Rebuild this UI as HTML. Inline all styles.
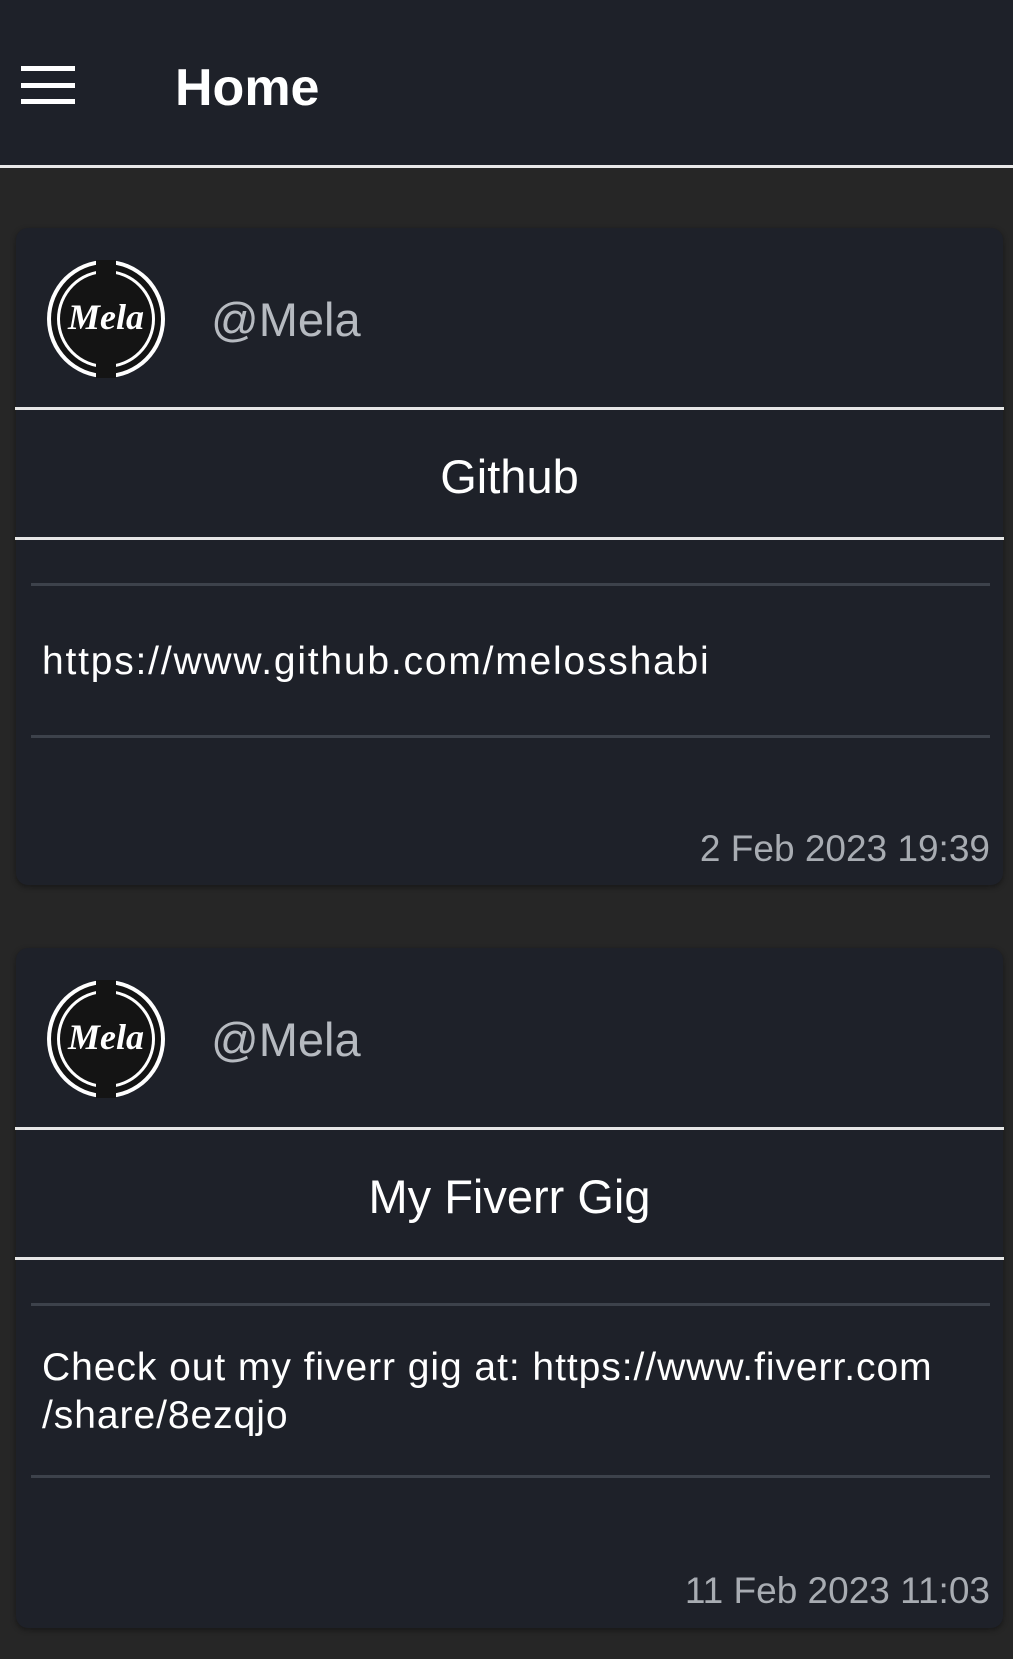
<!DOCTYPE html>
<html><head><meta charset="utf-8"><style>
*{margin:0;padding:0;box-sizing:border-box}
body{width:1013px;height:1659px;background:#262626;font-family:"Liberation Sans",sans-serif;position:relative;overflow:hidden}
.hdr{position:absolute;left:0;top:0;width:1013px;height:168px;background:#1e2129;border-bottom:3px solid #e8e8e8}
.ham{position:absolute;left:21px;width:54px;height:5px;background:#fff}
.title{position:absolute;left:175px;top:58px;font-size:52px;font-weight:bold;color:#fff}
.card{position:absolute;left:16px;width:987px;height:657px;background:#1e2129;border-radius:12px;box-shadow:0 2px 6px rgba(0,0,0,.4)}
.av{position:absolute;left:29px;top:30px}
.user{position:absolute;left:195px;top:64px;font-size:47px;color:#b6bac0}
.l1{position:absolute;left:-1px;width:989px;height:3px;background:#e6e6e6}
.t{position:absolute;left:0;width:987px;text-align:center;font-size:47px;color:#fff}
.il{position:absolute;left:15px;width:959px;height:3px;background:#3d424b}
.body{position:absolute;left:26px;font-size:39px;line-height:48px;color:#fff;letter-spacing:1px}
.date{position:absolute;right:13px;font-size:37px;color:#a8acb2}
</style></head><body>
<div class="hdr">
<div class="ham" style="top:66px"></div><div class="ham" style="top:83px"></div><div class="ham" style="top:99px"></div>
<div class="title">Home</div>
</div>

<div class="card" style="top:228px">
<svg class="av" width="122" height="122" viewBox="0 0 122 122"><circle cx="61" cy="61" r="59" fill="#fff"/><circle cx="61" cy="61" r="55" fill="#141414"/><circle cx="61" cy="61" r="49" fill="#fff"/><circle cx="61" cy="61" r="46" fill="#141414"/><rect x="51" y="2" width="20" height="20" fill="#141414"/><rect x="51" y="100" width="20" height="20" fill="#141414"/><text x="61" y="71" text-anchor="middle" font-family="Liberation Serif,serif" font-style="italic" font-weight="bold" font-size="36" fill="#fff">Mela</text></svg>
<div class="user">@Mela</div>
<div class="l1" style="top:179px"></div>
<div class="t" style="top:221px">Github</div>
<div class="l1" style="top:309px"></div>
<div class="il" style="top:355px"></div>
<div class="body" style="top:410px;letter-spacing:1.8px">https://www.github.com/melosshabi</div>
<div class="il" style="top:507px"></div>
<div class="date" style="top:600px">2 Feb 2023 19:39</div>
</div>

<div class="card" style="top:948px;height:680px">
<svg class="av" width="122" height="122" viewBox="0 0 122 122"><circle cx="61" cy="61" r="59" fill="#fff"/><circle cx="61" cy="61" r="55" fill="#141414"/><circle cx="61" cy="61" r="49" fill="#fff"/><circle cx="61" cy="61" r="46" fill="#141414"/><rect x="51" y="2" width="20" height="20" fill="#141414"/><rect x="51" y="100" width="20" height="20" fill="#141414"/><text x="61" y="71" text-anchor="middle" font-family="Liberation Serif,serif" font-style="italic" font-weight="bold" font-size="36" fill="#fff">Mela</text></svg>
<div class="user">@Mela</div>
<div class="l1" style="top:179px"></div>
<div class="t" style="top:221px">My Fiverr Gig</div>
<div class="l1" style="top:309px"></div>
<div class="il" style="top:355px"></div>
<div class="body" style="top:396px;letter-spacing:0.95px">Check out my fiverr gig at: https://www.fiverr.com<br>/share/8ezqjo</div>
<div class="il" style="top:527px"></div>
<div class="date" style="top:622px">11 Feb 2023 11:03</div>
</div>
</body></html>
